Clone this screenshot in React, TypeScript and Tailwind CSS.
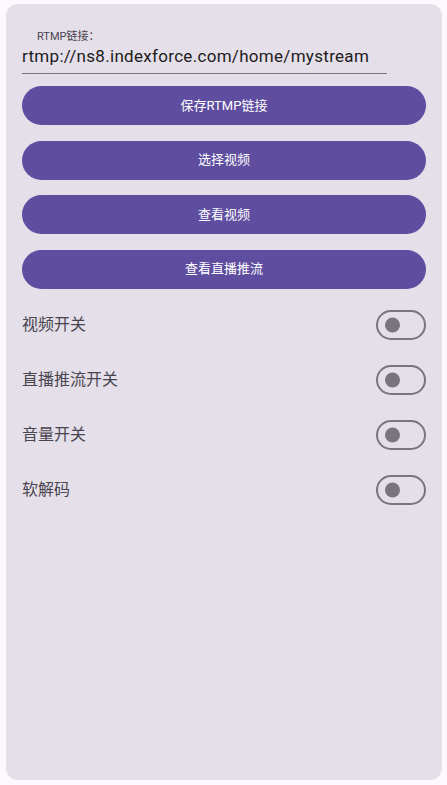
import { useState } from "react";

const buttons = ["保存RTMP链接", "选择视频", "查看视频", "查看直播推流"];
const toggles = ["视频开关", "直播推流开关", "音量开关", "软解码"];

const Toggle = ({ on, onClick }: { on: boolean; onClick: () => void }) => (
  <button
    onClick={onClick}
    className={`relative w-[50px] h-[30px] rounded-full border-2 ${
      on ? "bg-[#5f4ea0] border-[#5f4ea0]" : "border-[#79747e]"
    }`}
  >
    <span
      className={`absolute top-1/2 -translate-y-1/2 rounded-full ${
        on ? "right-[4px] w-[22px] h-[22px] bg-white" : "left-[7px] w-[15px] h-[15px] bg-[#79747e]"
      }`}
    ></span>
  </button>
);

export default function App() {
  const [states, setStates] = useState<boolean[]>([false, false, false, false]);
  const flip = (i: number) => setStates(states.map((s, j) => (j === i ? !s : s)));

  return (
    <div
      className="w-[447px] h-[785px] bg-[#fdf8fd] pt-[4px] pl-[6px] pr-[5px] pb-[5px]"
      style={{ fontFamily: "Roboto, 'Noto Sans CJK SC', sans-serif" }}
    >
      <div className="h-full bg-[#e4dfe9] rounded-[12px] pl-[16px] pr-[16px] pt-[26px]">
        <div className="w-[365px] border-b-[1.5px] border-[#79747e]">
          <div className="text-[11px] leading-[14px] text-[#49454f] pl-[15px]">RTMP链接：</div>
          <div className="text-[17px] leading-[24px] pb-[5px] text-[#1d1b20] tracking-[0.3px]">
            rtmp://ns8.indexforce.com/home/mystream
          </div>
        </div>
        <div className="flex flex-col gap-[15.5px] mt-[12px]">
          {buttons.map((b) => (
            <button
              key={b}
              className="h-[39px] rounded-full bg-[#5f4ea0] text-white text-[13px] font-normal"
            >
              {b}
            </button>
          ))}
        </div>
        <div className="flex flex-col mt-[21px] gap-[25px]">
          {toggles.map((t, i) => (
            <div key={t} className="flex items-center justify-between h-[30px]">
              <span className="text-[16px] text-[#49454f]">{t}</span>
              <Toggle on={states[i]} onClick={() => flip(i)} />
            </div>
          ))}
        </div>
      </div>
    </div>
  );
}
